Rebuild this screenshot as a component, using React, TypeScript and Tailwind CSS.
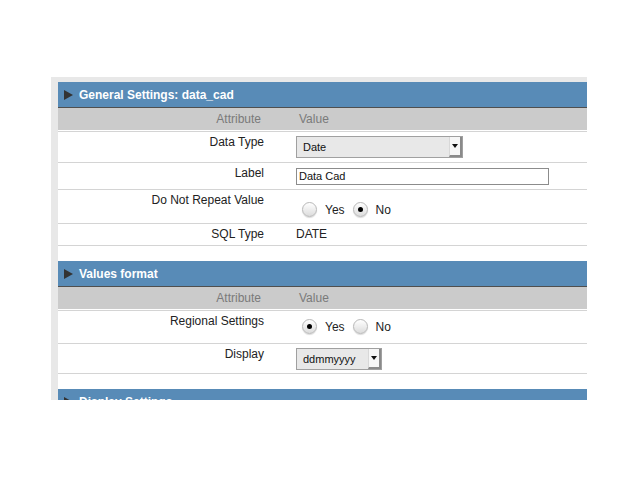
import React from 'react';

const Triangle: React.FC = () => (
  <svg width="9" height="10" viewBox="0 0 9 10" className="shrink-0">
    <polygon points="0,0 9,5 0,10" fill="#333333" />
  </svg>
);

const SectionHeader: React.FC<{ title: string }> = ({ title }) => (
  <div className="h-[25px] bg-[#588bb7] border-b border-[#4f4f4f] flex items-center pl-[6px] gap-[6px] box-content">
    <Triangle />
    <span className="text-white font-bold text-[12px] leading-[14px]">{title}</span>
  </div>
);

const ColumnHeader: React.FC = () => (
  <div className="h-[22px] bg-[#cbcbcb] border-b border-white box-content flex items-center text-[#7a7a7a]">
    <div className="w-[232px] text-right pr-[29px]">Attribute</div>
    <div className="pl-[9px]">Value</div>
  </div>
);

const Row: React.FC<{ label: string; h: string; last?: boolean; children: React.ReactNode }> = ({ label, h, last, children }) => (
  <div className={`flex border-t border-[#d4d4d4] ${last ? 'border-b' : ''} ${h} box-content`}>
    <div className="w-[232px] text-right pr-[26px] pt-[3px] leading-[14px] text-[#222]">{label}</div>
    <div className="pl-[6px] flex-1">{children}</div>
  </div>
);

const Select: React.FC<{ value: string; w: string }> = ({ value, w }) => (
  <div className={`${w} h-[22px] border border-[#a0a0a0] bg-[#e8e8e8] flex items-center justify-between`}>
    <span className="pl-[6px] text-[11px] text-[#111]">{value}</span>
    <span className="w-[13px] h-[20px] bg-[#f6f6f6] border-r-2 border-b-2 border-[#8a8a8a] border-l border-l-[#d8d8d8] flex items-center justify-center box-border">
      <svg width="6" height="4" viewBox="0 0 6 4">
        <polygon points="0,0 6,0 3,4" fill="#111" />
      </svg>
    </span>
  </div>
);

const Radio: React.FC<{ checked?: boolean; label: string }> = ({ checked, label }) => (
  <span className="flex items-end">
    <span className="w-[15px] h-[15px] rounded-full border border-[#b8b8b8] bg-gradient-to-b from-white to-[#dcdcdc] shadow-[0_1px_1px_rgba(0,0,0,0.15)] flex items-center justify-center mr-[8px]">
      {checked && <span className="w-[5px] h-[5px] rounded-full bg-black" />}
    </span>
    <span className="leading-[13px] text-[#222]">{label}</span>
  </span>
);

export default function App() {
  return (
    <div className="w-[640px] h-[480px] bg-white font-['Liberation_Sans',Arial,sans-serif] text-[12px] pt-[77px] pl-[51px]">
      <div className="w-[536px] h-[323px] overflow-hidden bg-[#e8e8e8] pl-[7px] pt-[5px]">
        <div className="w-[900px] bg-white">
          <div className="pb-[15px]">
            <SectionHeader title="General Settings: data_cad" />
            <ColumnHeader />
            <Row label="Data Type" h="h-[30px]">
              <div className="pt-[4px]">
                <Select value="Date" w="w-[167px]" />
              </div>
            </Row>
            <Row label="Label" h="h-[26px]">
              <div className="pt-[5px]">
                <div className="w-[253px] h-[17px] border border-[#8c8c8c] bg-white text-[11px] leading-[15px] pl-[2px] text-[#111]">
                  Data Cad
                </div>
              </div>
            </Row>
            <Row label="Do Not Repeat Value" h="h-[33px]">
              <div className="pt-[12px] pl-[6px] flex gap-[8px]">
                <Radio label="Yes" />
                <Radio label="No" checked />
              </div>
            </Row>
            <Row label="SQL Type" h="h-[21px]" last>
              <div className="pt-[3px] leading-[14px] text-[#222]">DATE</div>
            </Row>
          </div>

          <div className="pb-[15px]">
            <SectionHeader title="Values format" />
            <ColumnHeader />
            <Row label="Regional Settings" h="h-[32px]">
              <div className="pt-[8px] pl-[6px] flex gap-[8px]">
                <Radio label="Yes" checked />
                <Radio label="No" />
              </div>
            </Row>
            <Row label="Display" h="h-[29px]" last>
              <div className="pt-[4px]">
                <Select value="ddmmyyyy" w="w-[86px]" />
              </div>
            </Row>
          </div>

          <SectionHeader title="Display Settings" />
        </div>
      </div>
    </div>
  );
}
